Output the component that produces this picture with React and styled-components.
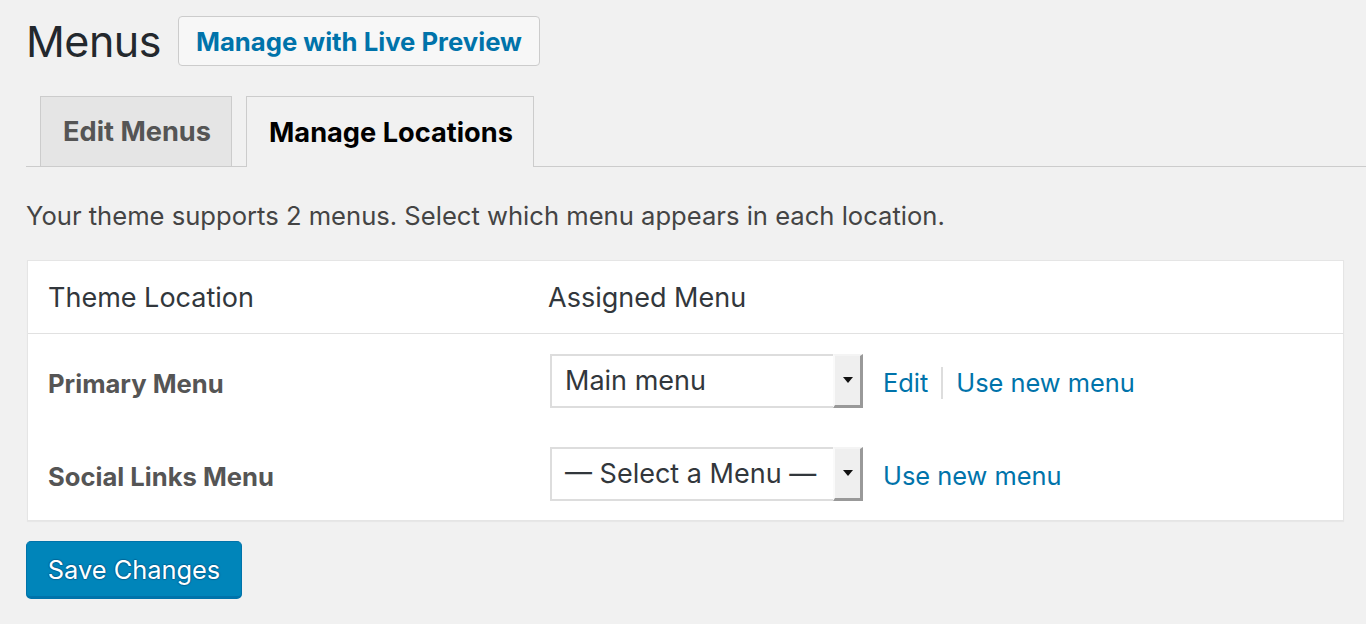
import React from 'react';
import styled, { createGlobalStyle } from 'styled-components';

const GlobalStyle = createGlobalStyle`
  html, body {
    margin: 0;
    padding: 0;
    background: #f1f1f1;
  }
  body {
    font-family: Inter, "Liberation Sans", sans-serif;
    color: #444;
  }
`;

const locations = [
  { name: 'Primary Menu', value: 'Main menu', edit: true },
  { name: 'Social Links Menu', value: '— Select a Menu —', edit: false },
];

const App = () => {
  return (
    <Wrap>
      <GlobalStyle />
      <Header>
        <Title>Menus</Title>
        <PreviewButton>Manage with Live Preview</PreviewButton>
      </Header>
      <Tabs>
        <Tab>Edit Menus</Tab>
        <Tab active>Manage Locations</Tab>
      </Tabs>
      <Description>
        Your theme supports 2 menus. Select which menu appears in each location.
      </Description>
      <Table>
        <HeadRow>
          <HeadCell>Theme Location</HeadCell>
          <HeadCell>Assigned Menu</HeadCell>
        </HeadRow>
        {locations.map(loc => (
          <Row key={loc.name}>
            <LocationName>{loc.name}</LocationName>
            <MenuCell>
              <Select>
                <SelectValue>{loc.value}</SelectValue>
                <SelectArrow>
                  <svg width="10" height="6" viewBox="0 0 10 6">
                    <path d="M0 0h10L5 6z" fill="#111" />
                  </svg>
                </SelectArrow>
              </Select>
              <Links>
                {loc.edit && (
                  <>
                    <Link>Edit</Link>
                    <Sep />
                  </>
                )}
                <Link>Use new menu</Link>
              </Links>
            </MenuCell>
          </Row>
        ))}
      </Table>
      <SaveButton>Save Changes</SaveButton>
    </Wrap>
  );
};

export default App;

//style
const Wrap = styled.div`
  padding: 16px 22px 0 26px;
  min-height: 624px;
  box-sizing: border-box;
`;
const Header = styled.div`
  display: flex;
  align-items: center;
  height: 50px;
`;
const Title = styled.h1`
  margin: 0 17px 0 0;
  font-size: 43px;
  font-weight: 400;
  color: #23282d;
  letter-spacing: -0.5px;
`;
const PreviewButton = styled.div`
  height: 50px;
  box-sizing: border-box;
  border: 1px solid #ccc;
  border-radius: 4px;
  background: #f7f7f7;
  color: #0073aa;
  font-size: 25.7px;
  font-weight: 700;
  padding: 0 17px;
  display: flex;
  align-items: center;
`;
const Tabs = styled.div`
  display: flex;
  gap: 14px;
  margin: 30px -22px 0 0;
  padding-left: 14px;
  border-bottom: 1px solid #ccc;
  height: 70px;
  align-items: flex-end;
`;
const Tab = styled.div`
  box-sizing: border-box;
  border: 1px solid #ccc;
  border-bottom: none;
  background: ${p => (p.active ? '#f1f1f1' : '#e5e5e5')};
  color: ${p => (p.active ? '#000' : '#555')};
  font-size: 27.2px;
  font-weight: 700;
  padding: 0 20px 0 22px;
  display: flex;
  align-items: center;
  margin-bottom: ${p => (p.active ? '-1px' : '0')};
  height: ${p => (p.active ? '71px' : '70px')};
`;
const Description = styled.p`
  margin: 0;
  padding-top: 34px;
  height: 59px;
  font-size: 25.6px;
  line-height: 30px;
  color: #444;
`;
const Table = styled.div`
  width: 1317px;
  margin-left: 1px;
  background: #fff;
  border: 1px solid #e5e5e5;
  box-shadow: 0 1px 1px rgba(0, 0, 0, 0.04);
  box-sizing: border-box;
`;
const HeadRow = styled.div`
  display: grid;
  grid-template-columns: 500px 1fr;
  height: 72px;
  border-bottom: 1px solid #e1e1e1;
  align-items: center;
`;
const HeadCell = styled.div`
  padding-left: 20px;
  font-size: 27px;
  color: #32373c;
`;
const Row = styled.div`
  display: grid;
  grid-template-columns: 500px 1fr;
  height: 93px;
  align-items: center;
`;
const LocationName = styled.div`
  padding: 6px 0 0 20px;
  font-size: 25.6px;
  font-weight: 700;
  color: #555;
`;
const MenuCell = styled.div`
  display: flex;
  align-items: center;
  padding-left: 22px;
`;
const Select = styled.div`
  width: 313px;
  height: 54px;
  box-sizing: border-box;
  border: 2px solid #ddd;
  border-right: none;
  background: #fff;
  display: flex;
  align-items: stretch;
`;
const SelectValue = styled.div`
  flex: 1;
  padding-left: 13px;
  font-size: 27px;
  color: #32373c;
  display: flex;
  align-items: center;
  white-space: nowrap;
  overflow: hidden;
`;
const SelectArrow = styled.div`
  width: 30px;
  margin-top: -2px;
  margin-bottom: -2px;
  box-sizing: border-box;
  background: #efefef;
  border-top: 2px solid #f4f4f4;
  border-left: 2px solid #fafafa;
  border-right: 3px solid #999;
  border-bottom: 3px solid #999;
  display: flex;
  align-items: center;
  justify-content: center;
`;
const Links = styled.div`
  display: flex;
  align-items: center;
  margin-left: 20px;
  padding-top: 4px;
`;
const Link = styled.span`
  color: #0073aa;
  font-size: 25.4px;
`;
const Sep = styled.span`
  width: 2px;
  height: 32px;
  background: #ddd;
  margin: 0 13px;
`;
const SaveButton = styled.div`
  margin-top: 20px;
  width: 216px;
  height: 58px;
  box-sizing: border-box;
  background: #0085ba;
  border: 1px solid #0073aa;
  border-bottom-width: 3px;
  border-radius: 5px;
  color: #fff;
  font-size: 25.4px;
  display: flex;
  align-items: center;
  justify-content: center;
  text-shadow: 0 -1px 1px #006799, 1px 0 1px #006799, 0 1px 1px #006799, -1px 0 1px #006799;
`;
